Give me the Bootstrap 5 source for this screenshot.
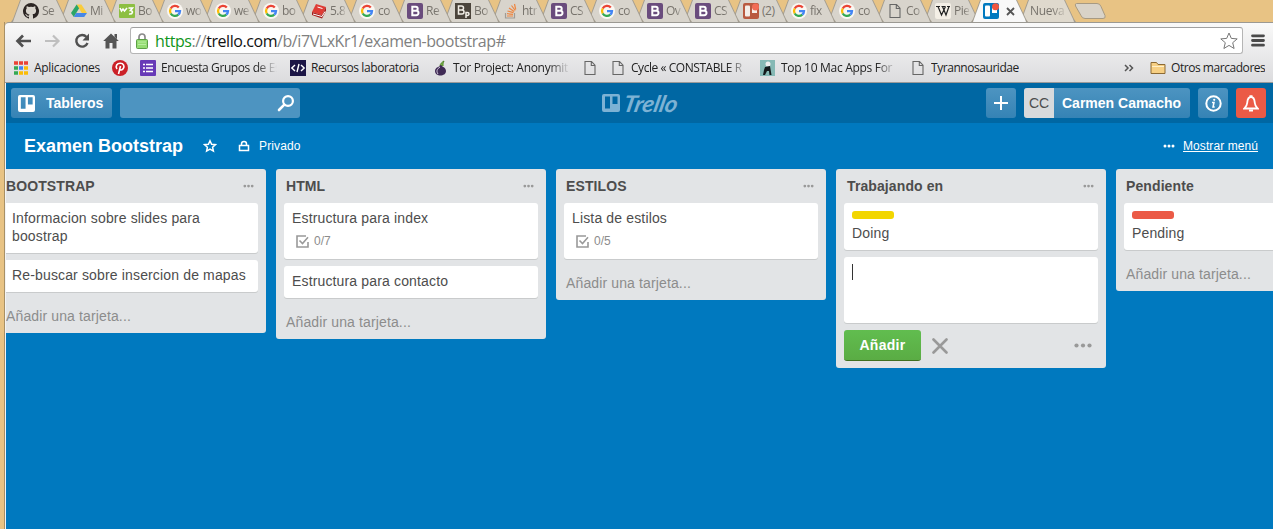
<!DOCTYPE html>
<html lang="es">
<head>
<meta charset="utf-8">
<title>Examen Bootstrap | Trello</title>
<link href="https://cdn.jsdelivr.net/npm/bootstrap@5.3.0/dist/css/bootstrap.min.css" rel="stylesheet">
<style>
body{width:1273px;height:529px;overflow:hidden;background:#e8c384;font-family:"Liberation Sans",Arial,sans-serif;font-size:14px;line-height:18px;color:#4d4d4d}
svg{display:block;flex:none}
.chrome{font-family:"Open Sans","Noto Sans",sans-serif;font-size:12px;letter-spacing:-.4px;color:#222}
/* tab strip */
.tabstrip{height:22px;padding-left:11px;isolation:isolate}
.tab{position:relative;width:48px;height:22px;padding-left:12px;flex:none}
.tab::before,.tab::after{content:"";position:absolute;inset:0 -9px 0 0;z-index:-1;background:#a29c90;clip-path:polygon(0 100%,2px 19px,9px 0,46px 0,55px 19px,57px 100%)}
.tab::after{background:#d8d4cc;clip-path:polygon(2px 100%,3px 19px,10px 0,45px 0,54px 19px,55px 100%)}
.tab span{position:relative;width:15px;margin-left:3px;overflow:hidden;white-space:nowrap;color:#77736c;line-height:21px;font-size:12px;letter-spacing:-.5px;-webkit-mask-image:linear-gradient(90deg,#000 65%,rgba(0,0,0,.25))}
.tab svg{margin-top:3px;align-self:flex-start;position:relative}
.tab.wide span{width:17px;-webkit-mask-image:none}
.tab.current::after{background:#f8f8f8}
.tab.current{z-index:30}
.tab.last::after{background:#dfd9cd}
.tab.last span{width:34px;margin-left:-1px;letter-spacing:-.3px}
.newtab{margin:3px 0 0 7px}
/* window body */
.window{margin-left:4px;height:507px;border-left:1px solid #a89065}
.toolbar{height:61px;border-top:1px solid #9b9993;border-radius:4px 0 0 0;background:linear-gradient(#f9f9f9,#dcdcde);border-bottom:1px solid #9a9a9a}
.navrow{height:31px;padding:4px 8px 0 10px}
.omni{width:1114px;height:27px;margin-left:11px;border:1px solid #b5b5b5;border-top-color:#a0a0a0;border-radius:3px;background:#fff;padding:0 4px 0 5px}
.url{font-size:16px;letter-spacing:-.43px;color:#808080;margin-left:7px;line-height:24px}
.url b{font-weight:400;color:#11951b}.url i{font-style:normal;color:#111}
.marks{height:28px;display:grid;grid-template-columns:98px 28px 150px 143px 149px 28px 148px 152px 212px 26px 1fr;padding-left:9px;align-items:center;white-space:nowrap}
.marks>div{display:flex;align-items:center}
.marks span{margin-left:5px;overflow:hidden;line-height:20px}
.fade-end{-webkit-mask-image:linear-gradient(90deg,#000 82%,transparent)}
/* trello */
.app{height:446px;background:#0079bf;border-left:1px solid #f4f4f4;overflow:hidden}
.topbar{height:40px;background:#0067a3;padding:0 7px 0 5px}
.tbtn{height:30px;border-radius:3px;background:linear-gradient(#4d94c1,#3583b5);color:#fff;font-weight:700;min-width:30px}
.findbox{width:180px;background:#4d94c1;padding-right:5px;margin-left:8px}
.face{width:30px;height:30px;background:#d8dadc;color:#4d4d4d;font-weight:400;border-radius:3px 0 0 3px}
.alertb{background:#eb5a46}
.brand{color:#7db2d4}
.brand em{font-family:Lato,sans-serif;font-weight:700;font-size:23px;letter-spacing:-.3px;line-height:26px;transform:skewX(-12deg) scaleX(1.05);transform-origin:0 50%;margin-left:4px}
.boardbar{height:46px;padding:0 15px 0 18px;color:#fff;font-size:12px}
.boardbar h1{font-size:18px;font-weight:700;line-height:24px;margin:0}
.lists{margin-left:-10px;gap:10px}
.lane{width:270px;flex:none;background:#e2e4e6;border-radius:3px;padding:0 8px}
.lane h2{font-size:14px;font-weight:700;line-height:34px;height:34px;margin:0;padding:0 4px 0 2px;letter-spacing:.1px}
.note{background:#fff;border-radius:3px;box-shadow:0 1px 0 #c9cbcc;padding:6px 8px 8px;margin-bottom:7px;letter-spacing:.15px}
.tally{font-size:12px;letter-spacing:0;color:#8c8c8c;padding:5px 4px 1px;gap:5px}
.tag{width:42px;height:8px;border-radius:3px;margin:2px 0 5px}
.addlink{height:34px;line-height:34px;color:#8c8c8c;padding-left:2px;letter-spacing:.13px}
.field{height:66px}
.caret{width:1px;height:16px;background:#333;margin-top:1px}
.go{width:77px;height:31px;border-radius:3px;background:linear-gradient(#61bd4f,#5aac44);border-bottom:1px solid #3f6f21;color:#fff;font-weight:700;letter-spacing:.3px}
</style>
</head>
<body>
<svg width="0" height="0" class="position-absolute">
<symbol id="g" viewBox="0 0 16 16"><circle cx="8" cy="8" r="8" fill="#faf7f2"/><g fill="none" stroke-width="2.3"><path d="M11.8 4.6A5 5 0 0 0 3.7 5.5" stroke="#ea4335"/><path d="M3.7 5.5A5 5 0 0 0 3.7 10.5" stroke="#fbbc05"/><path d="M3.7 10.5A5 5 0 0 0 11.3 11.7" stroke="#34a853"/><path d="M11.3 11.7A5 5 0 0 0 13 8.1H8" stroke="#4285f4"/></g></symbol>
<symbol id="b" viewBox="0 0 16 16"><rect width="16" height="16" rx="2" fill="#6a4c7d"/><path d="M5.3 3.8h3.400a2 2 0 0 1 0 4H5.300zm0 4h4a2.200 2.200 0 0 1 0 4.400H5.300z" fill="none" stroke="#fff" stroke-width="2"/></symbol>
<symbol id="doc" viewBox="0 0 16 16"><path d="M3 1.5h6.5l3.5 3.7v9.3H3zM9.3 1.5v4H13" fill="none" stroke="#666" stroke-width="1.1"/></symbol>
<symbol id="dots" viewBox="0 0 12 4"><circle cx="2" cy="2" r="1.5"/><circle cx="6" cy="2" r="1.5"/><circle cx="10" cy="2" r="1.5"/></symbol>
<symbol id="boards" viewBox="0 0 18 18"><path fill-rule="evenodd" d="M2 0h14a2 2 0 0 1 2 2v14a2 2 0 0 1-2 2H2a2 2 0 0 1-2-2V2a2 2 0 0 1 2-2zM3 2.5v12h5v-12zM10.5 2.5v7.5h5v-7.5z"/></symbol>
<symbol id="check" viewBox="0 0 13 13"><path d="M10 1H1v11h11V7M3.5 5.5l3 3L12 2.3" fill="none" stroke="#999" stroke-width="1.6"/></symbol>
</svg>

<div class="chrome tabstrip d-flex">
<div class="tab d-flex" style="z-index:21"><svg width="16" height="16" viewBox="0 0 16 16"><path fill="#2b2523" d="M8 0a8 8 0 0 0-2.5 15.6c.4.1.5-.2.5-.4v-1.5c-2.2.5-2.7-1-2.7-1-.4-.9-.9-1.2-.9-1.2-.7-.5.1-.5.1-.5.8.1 1.2.8 1.2.8.7 1.3 1.9.9 2.3.7.1-.5.3-.9.5-1.1C4.700 11.200 2.900 10.500 2.900 7.500c0-.9.3-1.600.8-2.100-.1-.2-.4-1 .1-2.100 0 0 .7-.2 2.200.8a7.500 7.500 0 0 1 4 0c1.500-1 2.200-.8 2.200-.8.400 1.100.200 1.900.100 2.100.500.600.800 1.300.800 2.100 0 3-1.800 3.700-3.600 3.900.300.200.500.700.500 1.500v2.300c0 .200.100.500.500.400A8 8 0 0 0 8 0z"/></svg><span>Se</span></div>
<div class="tab d-flex" style="z-index:20"><svg width="16" height="16" viewBox="0 0 17 16"><path fill="#f9cc3c" d="M6 1h5l6 9h-5.500z"/><path fill="#2aa567" d="M6 1l2.600 4L3 14.500 0 10z"/><path fill="#4687e8" d="M5.500 10H17l-3 4.500H3z"/></svg><span>Mi</span></div>
<div class="tab d-flex" style="z-index:19"><svg width="16" height="16" viewBox="0 0 16 16"><rect y="1" width="16" height="14" rx="1" fill="#8dbf42"/><path d="M1 5l1.500 3L4 6l1.500 2L8 5M9.500 5h4l-2 2.500c3 0 2.500 4-1.500 3.500" fill="none" stroke="#fff" stroke-width="1.600"/></svg><span>Bo</span></div>
<div class="tab d-flex" style="z-index:18"><svg width="16" height="16"><use href="#g"/></svg><span>wo</span></div>
<div class="tab d-flex" style="z-index:17"><svg width="16" height="16"><use href="#g"/></svg><span>we</span></div>
<div class="tab d-flex" style="z-index:16"><svg width="16" height="16"><use href="#g"/></svg><span>bo</span></div>
<div class="tab d-flex" style="z-index:15"><svg width="16" height="16" viewBox="0 0 16 16"><path d="M5 1l10 3-4 8L1 9z" fill="#df3c35"/><path d="M1 9l10 3 4-8v4l-4 7.500L1 12z" fill="#a51c1b"/><path d="M2 11l9 2.500 3-5" fill="none" stroke="#fff"/><path d="M6.500 4l5 1.500" stroke="#fff"/></svg><span>5.8</span></div>
<div class="tab d-flex" style="z-index:14"><svg width="16" height="16"><use href="#g"/></svg><span>co</span></div>
<div class="tab d-flex" style="z-index:13"><svg width="16" height="16"><use href="#b"/></svg><span>Re</span></div>
<div class="tab d-flex" style="z-index:12"><svg width="16" height="16" viewBox="0 0 16 16"><rect width="16" height="16" fill="#4b443b"/><path d="M3.500 3h3a1.800 1.800 0 0 1 0 4h-3zm0 4h3.500a2 2 0 0 1 0 4H3.500zM11 15V9.500h1.500a1 1 0 0 1 0 3H11" fill="none" stroke="#f2eee6" stroke-width="1.500"/></svg><span>Bo</span></div>
<div class="tab d-flex" style="z-index:11"><svg width="16" height="16" viewBox="0 0 16 16"><path d="M2.500 10v5h9v-5" fill="none" stroke="#a19b94" stroke-width="1.200"/><path d="M4 13h6M4 10.700l6 .6M4.500 8l6 1.700M6 5l5.200 3.500M8.500 2.500l3.700 5M11.500 1l1.200 5.500" stroke="#ee8640" stroke-width="1.200"/></svg><span>htr</span></div>
<div class="tab d-flex" style="z-index:10"><svg width="16" height="16"><use href="#b"/></svg><span>CS</span></div>
<div class="tab d-flex" style="z-index:9"><svg width="16" height="16"><use href="#g"/></svg><span>co</span></div>
<div class="tab d-flex" style="z-index:8"><svg width="16" height="16"><use href="#b"/></svg><span>Ov</span></div>
<div class="tab d-flex" style="z-index:7"><svg width="16" height="16"><use href="#b"/></svg><span>CS</span></div>
<div class="tab wide d-flex" style="z-index:6"><svg width="16" height="16" viewBox="0 0 16 16"><rect width="16" height="16" rx="2" fill="#b95a40"/><rect x="2" y="2.500" width="5" height="11" rx="1" fill="#f5eee8"/><rect x="9" y="5" width="5" height="5" fill="#f5eee8"/><circle cx="12.500" cy="4" r="3.500" fill="#f26d55"/></svg><span>(2)</span></div>
<div class="tab d-flex" style="z-index:5"><svg width="16" height="16"><use href="#g"/></svg><span>fix</span></div>
<div class="tab d-flex" style="z-index:4"><svg width="16" height="16"><use href="#g"/></svg><span>co</span></div>
<div class="tab d-flex" style="z-index:3"><svg width="16" height="16"><use href="#doc"/></svg><span>Co</span></div>
<div class="tab d-flex" style="z-index:2"><svg width="16" height="16" viewBox="0 0 16 16"><rect width="16" height="16" rx="2" fill="#f4efe6"/><path d="M1 3.500h4M6.500 3.500h4M12 3.500h3M3 3.500L6.500 12l4-8.500M7.500 3.500L11 12l3-8.500" fill="none" stroke="#222" stroke-width="1.200"/></svg><span>Pie</span></div>
<div class="tab current d-flex"><svg width="16" height="16" viewBox="0 0 16 16"><rect width="16" height="16" rx="2" fill="#0079bf"/><rect x="2" y="2.500" width="5" height="11" rx="1" fill="#fff"/><rect x="9" y="5" width="5" height="5" fill="#fff"/><circle cx="12.500" cy="3.700" r="3.500" fill="#f0563f"/></svg><svg width="9" height="9" viewBox="0 0 9 9" style="margin:7px 0 0 7px"><path d="M1 1l7 7M8 1L1 8" stroke="#555" stroke-width="1.800"/></svg></div>
<div class="tab last d-flex" style="z-index:1"><span>Nueva</span></div>
<svg class="newtab" width="32" height="16" viewBox="0 0 32 16"><path d="M2.500.5H23q3 0 4 3l4 9q1 3-2 3H11q-3 0-4-3L1.500 3Q.8.5 2.500.5z" fill="#d9d3c8" stroke="#a79a82"/></svg>
</div>

<div class="window">
<div class="chrome toolbar">
<div class="navrow d-flex align-items-center">
<svg width="17" height="14" viewBox="0 0 17 14"><path d="M16 7H3M8 1.500L2.500 7 8 12.500" fill="none" stroke="#505050" stroke-width="2.700"/></svg>
<svg width="17" height="14" viewBox="0 0 17 14" style="margin-left:12px"><path d="M1 7h13M9 1.500L14.500 7 9 12.500" fill="none" stroke="#bfbfbf" stroke-width="2.200"/></svg>
<svg width="16" height="16" viewBox="0 0 16 16" style="margin-left:13px"><path d="M12.500 4A5.800 5.800 0 1 0 13.500 10" fill="none" stroke="#505050" stroke-width="2.400"/><path d="M15 .5v7H8.500z" fill="#505050"/></svg>
<svg width="16" height="16" viewBox="0 0 16 16" style="margin-left:13px"><path d="M8 .5l7.800 7.500H13.500V15.500h-4V10h-3v5.500h-4V8H.2zM11.500 1H14v5l-2.500-2.400z" fill="#555"/></svg>
<div class="omni d-flex align-items-center">
<svg width="12" height="16" viewBox="0 0 12 16"><path d="M3 7V4a3 3 0 0 1 6 0v3" fill="none" stroke="#8a8a8a" stroke-width="1.700"/><rect x=".5" y="6.500" width="11" height="9" rx="1" fill="#95dc72" stroke="#5b9f45"/><path d="M2 9h8M2 11.500h8" stroke="#b9eda0"/></svg>
<span class="url"><b>https</b>://<i>trello.com</i>/b/i7VLxKr1/examen-bootstrap#</span>
<svg class="ms-auto" width="18" height="18" viewBox="0 0 18 18"><path d="M9 1l2.300 5.400 5.900.5-4.500 3.800 1.400 5.800L9 13.400l-5.100 3.100 1.400-5.800L.8 6.900l5.900-.5z" fill="#fff" stroke="#777"/></svg>
</div>
<svg width="14" height="13" viewBox="0 0 14 13" style="margin-left:8px"><path d="M1.500 1.800h11M1.500 6.500h11M1.500 11.200h11" stroke="#4a4a4a" stroke-width="2.800" stroke-linecap="round"/></svg>
</div>
<div class="marks">
<div><svg width="14" height="14" viewBox="0 0 14 14"><path d="M0 2h14" stroke="#ea4335" stroke-width="3.500" stroke-dasharray="4 1"/><path d="M0 7h4" stroke="#34a853" stroke-width="3.500"/><path d="M5 7h4" stroke="#4285f4" stroke-width="3.500"/><path d="M10 7h4" stroke="#fbbc05" stroke-width="3.500"/><path d="M0 12h4" stroke="#34a853" stroke-width="3.500"/><path d="M5 12h9" stroke="#fbbc05" stroke-width="3.500" stroke-dasharray="4 1"/></svg><span style="margin-left:6px;letter-spacing:-.28px">Aplicaciones</span></div>
<div><svg width="16" height="16" viewBox="0 0 16 16"><circle cx="8" cy="8" r="8" fill="#cb2027"/><path d="M6.500 14l2-8M5 9C3 6 5 3.300 8.300 3.300s4.500 3 3 5.200c-1.200 1.900-3 1.800-3.700.6" fill="none" stroke="#fff" stroke-width="1.600"/></svg></div>
<div><svg width="16" height="16" viewBox="0 0 16 16"><rect width="16" height="16" rx="1" fill="#673ab7"/><path d="M3 4.500h2M3 8h2M3 11.500h2M6 4.500h7M6 8h7M6 11.500h7" stroke="#fff" stroke-width="1.700"/></svg><span class="fade-end" style="width:116px">Encuesta Grupos de Es</span></div>
<div><svg width="16" height="16" viewBox="0 0 16 16"><rect width="16" height="16" fill="#1c1646"/><path d="M5 5L1.800 8 5 11M11 5l3.200 3L11 11M9 4l-2 8" fill="none" stroke="#fff" stroke-width="1.400"/></svg><span>Recursos laboratoria</span></div>
<div><svg width="15" height="16" viewBox="0 0 15 16"><path d="M7 6c0-2 2-4 4-5-1 2-1 3-1 5" fill="#7ab648" stroke="#4f8428"/><path d="M7.500 5C7 7 2 7 2 11c0 6 11 6 11 0 0-4-4.500-4-4.500-6z" fill="#3f2a55"/><path d="M7 7c-3 2-4 4-2 7" stroke="#cfc4d8" fill="none"/></svg><span class="fade-end" style="width:117px;letter-spacing:-.3px">Tor Project: Anonymit</span></div>
<div><svg width="16" height="16"><use href="#doc"/></svg></div>
<div><svg width="16" height="16"><use href="#doc"/></svg><span class="fade-end" style="width:117px;letter-spacing:-.45px">Cycle « CONSTABLE R</span></div>
<div style="padding-left:2px"><svg width="15" height="16" viewBox="0 0 15 16"><rect width="15" height="16" fill="#86b9b5"/><circle cx="8" cy="4" r="2.500" fill="#eee"/><path d="M5 7l5-1 1.500 9H9.500L9 11H7l-2 4H3l1-5z" fill="#151a1c"/></svg><span class="fade-end" style="width:116px;letter-spacing:-.3px;margin-left:6px">Top 10 Mac Apps For</span></div>
<div><svg width="16" height="16"><use href="#doc"/></svg><span style="letter-spacing:-.45px">Tyrannosauridae</span></div>
<div style="padding-left:2px"><svg width="10" height="8" viewBox="0 0 10 8"><path d="M1 1l3 3-3 3M5.500 1l3 3-3 3" fill="none" stroke="#555" stroke-width="1.500"/></svg></div>
<div style="padding-left:2px"><svg width="16" height="14" viewBox="0 0 16 14"><path d="M1 12.500v-11h5.500L8 3.500h7v9z" fill="#f7cf83" stroke="#8c6a34"/><path d="M2 5.500h12" stroke="#fff0c8"/></svg><span style="letter-spacing:-.45px">Otros marcadores</span></div>
</div>
</div>

<main class="app">
<div class="topbar d-flex align-items-center">
<div class="tbtn d-flex align-items-center" style="width:101px;padding-left:7px"><svg width="17" height="17" fill="#fff"><use href="#boards"/></svg><span style="margin-left:11px">Tableros</span></div>
<div class="tbtn findbox d-flex align-items-center justify-content-end"><svg width="18" height="18" viewBox="0 0 18 18"><circle cx="11" cy="7" r="4.900" fill="none" stroke="#fff" stroke-width="2.200"/><path d="M7.300 10.700L2 16" stroke="#fff" stroke-width="2.600" stroke-linecap="round"/></svg></div>
<div class="brand d-flex align-items-center" style="margin-left:302px"><svg width="18" height="18" fill="#7db2d4"><use href="#boards"/></svg><em>Trello</em></div>
<div class="d-flex gap-2 ms-auto">
<div class="tbtn d-flex align-items-center justify-content-center"><svg width="14" height="14" viewBox="0 0 14 14"><path d="M7 0v14M0 7h14" stroke="#fff" stroke-width="2"/></svg></div>
<div class="tbtn d-flex align-items-center" style="width:166px"><span class="face d-flex align-items-center justify-content-center">CC</span><span class="ms-2">Carmen Camacho</span></div>
<div class="tbtn d-flex align-items-center justify-content-center"><svg width="17" height="17" viewBox="0 0 17 17"><circle cx="8.500" cy="8.500" r="7.200" fill="none" stroke="#fff" stroke-width="2"/><path d="M7 7.500h2L8 12h1.700" fill="none" stroke="#fff" stroke-width="1.500"/><circle cx="9.200" cy="4.800" r="1.100" fill="#fff"/></svg></div>
<div class="tbtn alertb d-flex align-items-center justify-content-center"><svg width="16" height="17" viewBox="0 0 16 17"><path d="M8 2C4.500 2 4.500 5 4.200 8S2.500 12 1.200 13.500h13.600C13.500 12 12.100 11 11.800 8S11.500 2 8 2z" fill="none" stroke="#fff" stroke-width="1.800"/><path d="M6.500 1.200h3M6 15.500h4" stroke="#fff" stroke-width="2"/></svg></div>
</div>
</div>
<div class="boardbar d-flex align-items-center">
<h1>Examen Bootstrap</h1>
<svg width="14" height="14" viewBox="0 0 14 14" style="margin-left:20px"><path d="M7 1.800l1.600 3.500 3.800.4-2.800 2.600.8 3.800L7 10.200l-3.400 1.900.8-3.800L1.600 5.700l3.800-.4z" fill="none" stroke="#fff" stroke-width="1.500"/></svg>
<svg width="12" height="12" viewBox="0 0 12 12" style="margin-left:21px"><path d="M1.500 5.500h9v5h-9zM3.500 5.500V4a2.500 2.500 0 0 1 5 0v1.500" fill="none" stroke="#fff" stroke-width="1.500"/></svg>
<span style="margin-left:9px;letter-spacing:.12px">Privado</span>
<svg class="ms-auto" width="12" height="4" fill="#fff"><use href="#dots"/></svg>
<u style="margin-left:8px;letter-spacing:.08px">Mostrar menú</u>
</div>
<div class="lists d-flex align-items-start">
<section class="lane"><h2 class="d-flex align-items-center justify-content-between">BOOTSTRAP<svg width="11" height="4" fill="#999"><use href="#dots"/></svg></h2>
<div class="note">Informacion sobre slides para boostrap</div><div class="note">Re-buscar sobre insercion de mapas</div><div class="addlink">Añadir una tarjeta...</div></section>
<section class="lane"><h2 class="d-flex align-items-center justify-content-between">HTML<svg width="11" height="4" fill="#999"><use href="#dots"/></svg></h2>
<div class="note">Estructura para index<div class="tally d-flex align-items-center"><svg width="13" height="13"><use href="#check"/></svg>0/7</div></div><div class="note">Estructura para contacto</div><div class="addlink">Añadir una tarjeta...</div></section>
<section class="lane"><h2 class="d-flex align-items-center justify-content-between">ESTILOS<svg width="11" height="4" fill="#999"><use href="#dots"/></svg></h2>
<div class="note">Lista de estilos<div class="tally d-flex align-items-center"><svg width="13" height="13"><use href="#check"/></svg>0/5</div></div><div class="addlink">Añadir una tarjeta...</div></section>
<section class="lane" style="padding-bottom:7px"><h2 class="d-flex align-items-center justify-content-between" style="padding-left:3px">Trabajando en<svg width="11" height="4" fill="#999"><use href="#dots"/></svg></h2>
<div class="note"><div class="tag" style="background:#f2d600"></div>Doing</div><div class="note field"><div class="caret"></div></div>
<div class="d-flex align-items-center"><div class="go d-flex align-items-center justify-content-center">Añadir</div><svg width="16" height="16" viewBox="0 0 16 16" style="margin-left:11px"><path d="M1.500 1.500l13 13M14.500 1.500l-13 13" stroke="#999" stroke-width="2.600" stroke-linecap="round"/></svg><svg class="ms-auto" width="18" height="5" viewBox="0 0 18 5" fill="#999" style="margin-right:6px"><circle cx="2.500" cy="2.500" r="2.100"/><circle cx="9" cy="2.500" r="2.100"/><circle cx="15.500" cy="2.500" r="2.100"/></svg></div></section>
<section class="lane"><h2 class="d-flex align-items-center justify-content-between">Pendiente<svg width="11" height="4" fill="#999"><use href="#dots"/></svg></h2>
<div class="note"><div class="tag" style="background:#eb5a46"></div>Pending</div><div class="addlink">Añadir una tarjeta...</div></section>
</div>
</main>
</div>
<script src="https://cdn.jsdelivr.net/npm/bootstrap@5.3.0/dist/js/bootstrap.bundle.min.js"></script>
</body>
</html>
